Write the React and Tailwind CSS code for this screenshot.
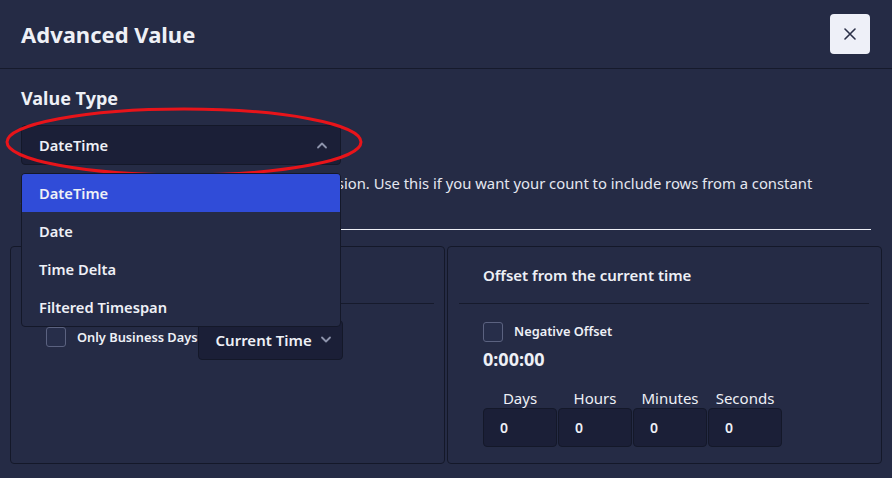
import React from "react";

function ChevronUp({ className }) {
  return (
    <svg className={className} width="12" height="8" viewBox="0 0 12 8" fill="none">
      <path d="M2 6.5 L6 2.5 L10 6.5" stroke="currentColor" strokeWidth="1.8" strokeLinecap="round" strokeLinejoin="round" />
    </svg>
  );
}

function ChevronDown({ className }) {
  return (
    <svg className={className} width="12" height="8" viewBox="0 0 12 8" fill="none">
      <path d="M2 1.5 L6 5.5 L10 1.5" stroke="currentColor" strokeWidth="1.8" strokeLinecap="round" strokeLinejoin="round" />
    </svg>
  );
}

function Checkbox() {
  return <div className="w-[20px] h-[20px] shrink-0 rounded-[3px] border border-[#5b6280] bg-[#272e4a]" />;
}

export default function App() {
  const menu = ["DateTime", "Date", "Time Delta", "Filtered Timespan"];
  const units = ["Days", "Hours", "Minutes", "Seconds"];
  return (
    <div className="w-[892px] h-[478px] bg-[#252b45] text-[#eef0f6] overflow-hidden font-['Noto_Sans','Open_Sans',sans-serif]">
      {/* Header */}
      <div className="h-[69px] flex items-center justify-between pl-[21px] pr-[22px] border-b border-[#161a2c]">
        <h1 className="text-[22px] font-bold leading-none">Advanced Value</h1>
        <button className="w-[40px] h-[40px] rounded-[4px] bg-[#eef0f8] flex items-center justify-center text-[#2b3048]">
          <svg width="12" height="12" viewBox="0 0 12 12" fill="none">
            <path d="M1 1 L11 11 M11 1 L1 11" stroke="currentColor" strokeWidth="1.6" strokeLinecap="round" />
          </svg>
        </button>
      </div>

      {/* Body */}
      <div className="px-[21px] pt-[17px]">
        <div className="text-[18px] font-bold leading-[24px]">Value Type</div>
        <div className="relative mt-[15px] w-[320px]">
          <div className="h-[40px] rounded-[4px] bg-[#1b1f37] border border-[#141829] flex items-center justify-between pl-[17px] pr-[12px]">
            <span className="text-[14.7px] font-semibold">DateTime</span>
            <ChevronUp className="text-[#8d93ab]" />
          </div>
          {/* red annotation ellipse */}
          <svg className="absolute left-[-17px] top-[-19px] pointer-events-none" width="360" height="72" viewBox="0 0 360 72">
            <ellipse cx="180" cy="36" rx="177" ry="33" fill="none" stroke="#e8141a" strokeWidth="3" />
          </svg>
          {/* dropdown menu */}
          <div className="absolute left-0 top-[48px] w-[320px] z-10 rounded-[4px] bg-[#252b45] border border-[#141829] overflow-hidden">
            {menu.map((m, i) => (
              <div
                key={m}
                className={
                  "h-[38px] flex items-center pl-[17px] text-[14.7px] font-semibold " +
                  (i === 0 ? "bg-[#304cd8]" : "")
                }
              >
                {m}
              </div>
            ))}
          </div>
        </div>
        <p className="mt-[7px] text-[14.8px] leading-[22px] text-[#e4e7f0] w-[850px]">
          Calculates the point in time relative to the session. Use this if you want your count to include rows from a constant
          <br />
          window of time.
        </p>
        <div className="mt-[13px] h-px w-[850px] bg-[#eef0f6]" />
      </div>

      {/* Panels */}
      <div className="mt-[16px] px-[10px] flex gap-[2px]">
        <div className="w-[436px] h-[218px] rounded-[4px] border border-[#141829]">
          <div className="h-[57px] mx-[10px] border-b border-[#161a2c] flex items-center pl-[26px] text-[15px] font-semibold">
            Start from
          </div>
          <div className="pl-[35px] pt-[16px] flex items-start">
            <div className="mt-[7px] flex items-center">
              <Checkbox />
              <span className="ml-[11px] text-[12.8px] leading-[20px] font-semibold">Only Business Days</span>
            </div>
            <div className="h-[40px] w-[145px] rounded-[4px] bg-[#1b1f37] border border-[#141829] flex items-center justify-between pl-[17px] pr-[10px]">
              <span className="text-[15px] font-semibold">Current Time</span>
              <ChevronDown className="text-[#8d93ab]" />
            </div>
          </div>
        </div>
        <div className="w-[436px] h-[218px] rounded-[4px] border border-[#141829]">
          <div className="h-[57px] ml-[11px] mr-[12px] border-b border-[#161a2c] flex items-center pl-[24px] text-[15px] font-semibold">
            Offset from the current time
          </div>
          <div className="pl-[35px] pt-[18px]">
            <div className="flex items-center">
              <Checkbox />
              <span className="ml-[11px] text-[12.8px] font-semibold">Negative Offset</span>
            </div>
            <div className="mt-[5px] text-[18px] font-bold leading-[24px]">0:00:00</div>
            <div className="mt-[17px] flex gap-[1px]">
              {units.map((u) => (
                <div key={u} className="w-[74px] flex flex-col items-center">
                  <div className="text-[15px] leading-[20px] text-[#eef0f6]">{u}</div>
                  <div className="w-[74px] h-[39px] rounded-[4px] bg-[#1b1f37] border border-[#141829] flex items-center pl-[16px] text-[14px] font-semibold">
                    0
                  </div>
                </div>
              ))}
            </div>
          </div>
        </div>
      </div>
    </div>
  );
}
